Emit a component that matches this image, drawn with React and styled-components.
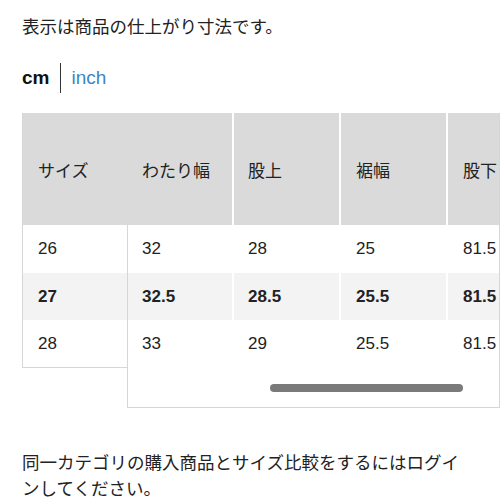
import styled, { createGlobalStyle } from 'styled-components'

const GlobalStyle = createGlobalStyle`
body{
  margin:0;
  background:#fff;
  font-family:"Liberation Sans", "Noto Sans CJK JP", sans-serif;
  color:#222;
}
`

const Page = styled.div`
width:500px;
padding:14px 0 0 22px;
box-sizing:border-box;
`

const Note = styled.p`
margin:0;
font-size:17.5px;
line-height:26px;
max-width:445px;
`

const UnitRow = styled.div`
display:flex;
align-items:center;
height:30px;
margin:23px 0 20px;
`

const Unit = styled.span`
font-size:19px;
font-weight:${p => p.active ? 700 : 400};
color:${p => p.active ? '#111' : '#3b86c4'};
`

const Divider = styled.span`
width:1px;
height:30px;
background:#333;
margin:0 10px 0 11px;
`

const Table = styled.div`
display:flex;
align-items:flex-start;
font-size:17px;
`

const StickyCol = styled.div`
width:104px;
flex-shrink:0;
border-left:1px solid #d6d6d6;
border-bottom:1px solid #d6d6d6;
`

const Scroller = styled.div`
flex:1;
min-width:0;
overflow:hidden;
border-right:1px solid #d6d6d6;
border-bottom:1px solid #d6d6d6;
`

const Row = styled.div`
display:flex;
height:${p => p.head ? '112px' : p.first ? '48px' : '47px'};
background:${p => p.head ? '#dadada' : p.alt ? '#f3f3f3' : '#fff'};
font-weight:${p => p.alt ? 700 : 400};
border-left:${p => p.edge ? `1px solid ${p.head ? '#dadada' : '#d6d6d6'}` : 'none'};
`

const Cell = styled.div`
display:flex;
align-items:center;
flex-shrink:0;
box-sizing:border-box;
width:${p => p.w}px;
padding-left:${p => p.pad}px;
border-left:${p => p.sep ? '2px solid #fff' : 'none'};
white-space:nowrap;
`

const Track = styled.div`
height:40px;
padding-top:17px;
box-sizing:border-box;
border-left:1px solid #d6d6d6;
`

const Thumb = styled.div`
margin-left:142px;
width:193px;
height:8px;
border-radius:4px;
background:#7a7a7a;
`

const BottomNote = styled(Note)`
margin-top:42px;
`

const heads = ['わたり幅', '股上', '裾幅', '股下']
const rows = [
  { size: '26', vals: ['32', '28', '25', '81.5'] },
  { size: '27', vals: ['32.5', '28.5', '25.5', '81.5'], alt: true },
  { size: '28', vals: ['33', '29', '25.5', '81.5'] },
]
const widths = [104, 107, 107, 107]
const pads = [14, 14, 15, 15]

export default function App(){
  return(
    <Page>
      <GlobalStyle />
      <Note>表示は商品の仕上がり寸法です。</Note>
      <UnitRow>
        <Unit active>cm</Unit>
        <Divider />
        <Unit>inch</Unit>
      </UnitRow>
      <Table>
        <StickyCol>
          <Row head><Cell w={104} pad={15}>サイズ</Cell></Row>
          {rows.map((r, i) => (
            <Row key={r.size} first={i === 0} alt={r.alt}>
              <Cell w={104} pad={15}>{r.size}</Cell>
            </Row>
          ))}
        </StickyCol>
        <Scroller>
          <Row head edge>
            {heads.map((h, i) => (
              <Cell key={h} w={widths[i]} pad={pads[i]} sep={i > 0}>{h}</Cell>
            ))}
          </Row>
          {rows.map((r, ri) => (
            <Row key={r.size} edge first={ri === 0} alt={r.alt}>
              {r.vals.map((v, i) => (
                <Cell key={i} w={widths[i]} pad={pads[i]} sep={i > 0}>{v}</Cell>
              ))}
            </Row>
          ))}
          <Track><Thumb /></Track>
        </Scroller>
      </Table>
      <BottomNote>同一カテゴリの購入商品とサイズ比較をするにはログインしてください。</BottomNote>
    </Page>
  )
}
